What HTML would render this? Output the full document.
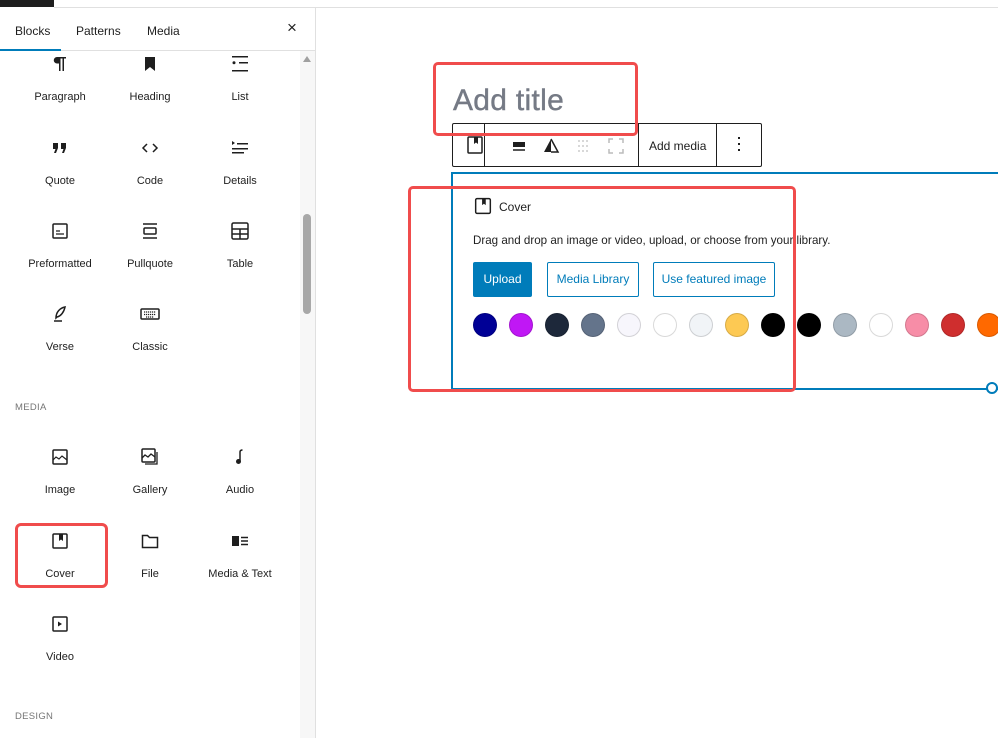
<!DOCTYPE html>
<html><head><meta charset="utf-8"><style>
*{margin:0;padding:0;box-sizing:border-box}
body{width:998px;height:738px;overflow:hidden;background:#fff;font-family:"Liberation Sans",sans-serif;color:#1e1e1e;position:relative}
.a{position:absolute}
.lbl{position:absolute;width:90px;text-align:center;font-size:11px;color:#1e1e1e}
.ic{position:absolute;width:24px;height:24px}
.cap{position:absolute;left:15px;font-size:9.5px;color:#757575;letter-spacing:.3px}
.dot{position:absolute;top:313px;width:24px;height:24px;border-radius:50%;border:1px solid rgba(0,0,0,.15)}
</style></head><body>
<div class="a" style="left:0;top:0;width:54px;height:7px;background:#1e1e1e"></div>
<div class="a" style="left:54px;top:7px;width:944px;height:1px;background:#e0e0e0"></div>
<div class="a" style="left:315px;top:8px;width:1px;height:730px;background:#e0e0e0"></div>
<div class="a" style="left:0;top:50px;width:315px;height:1px;background:#e0e0e0"></div>
<div class="a" style="left:0;top:49px;width:61px;height:2px;background:#007cba"></div>
<div class="a" style="left:15px;top:24px;font-size:12px">Blocks</div>
<div class="a" style="left:76px;top:24px;font-size:12px">Patterns</div>
<div class="a" style="left:147px;top:24px;font-size:12px">Media</div>
<div class="a" style="left:287px;top:18px;font-size:17px">×</div>
<div class="a" style="left:300px;top:51px;width:15px;height:687px;background:#f7f7f7"></div>
<div class="a" style="left:303px;top:56px;width:0;height:0;border-left:4px solid transparent;border-right:4px solid transparent;border-bottom:6px solid #a0a0a0"></div>
<div class="a" style="left:303px;top:214px;width:8px;height:100px;border-radius:4px;background:#a8a8a8"></div>

<svg class="ic" style="left:48px;top:52px" viewBox="0 0 24 24"><path d="M9 5h9v1.5h-2V19h-1.5V6.5h-2V19H11v-7.5H9a3.25 3.25 0 010-6.5z" fill="#1e1e1e"/></svg>
<svg class="ic" style="left:138px;top:52px" viewBox="0 0 24 24"><path d="M7 5h10v14l-5-4-5 4z" fill="#1e1e1e"/></svg>
<svg class="ic" style="left:228px;top:52px" viewBox="0 0 24 24"><path d="M4 4h16v1.5H4zM11 10h9v1.5h-9zM4 18h16v1.5H4z" fill="#1e1e1e"/><circle cx="6" cy="10.7" r="1.5" fill="#1e1e1e"/></svg>
<div class="lbl" style="left:15px;top:91px">Paragraph</div>
<div class="lbl" style="left:105px;top:91px">Heading</div>
<div class="lbl" style="left:195px;top:91px">List</div>
<svg class="ic" style="left:48px;top:136px" viewBox="0 0 24 24"><path d="M5 7h5v5l-2 5H6l1.5-4H5zM13 7h5v5l-2 5h-2l1.5-4H13z" fill="#1e1e1e"/></svg>
<svg class="ic" style="left:138px;top:136px" viewBox="0 0 24 24"><path d="M9 8l-4 4 4 4M15 8l4 4-4 4" fill="none" stroke="#1e1e1e" stroke-width="1.5"/></svg>
<svg class="ic" style="left:228px;top:136px" viewBox="0 0 24 24"><path d="M4 5l3 2-3 2zM9 7h11v1.5H9zM4 12h16v1.5H4zM4 16h12v1.5H4z" fill="#1e1e1e"/></svg>
<div class="lbl" style="left:15px;top:175px">Quote</div>
<div class="lbl" style="left:105px;top:175px">Code</div>
<div class="lbl" style="left:195px;top:175px">Details</div>
<svg class="ic" style="left:48px;top:219px" viewBox="0 0 24 24"><rect x="5" y="5" width="14" height="14" rx="1" fill="none" stroke="#1e1e1e" stroke-width="1.5"/><path d="M8 12h4M8 15h8" stroke="#1e1e1e" stroke-width="1.3"/></svg>
<svg class="ic" style="left:138px;top:219px" viewBox="0 0 24 24"><path d="M5 5h14M5 19h14" stroke="#1e1e1e" stroke-width="1.5"/><rect x="6" y="9" width="12" height="6" rx="1" fill="none" stroke="#1e1e1e" stroke-width="1.5"/></svg>
<svg class="ic" style="left:228px;top:219px" viewBox="0 0 24 24"><rect x="4" y="4" width="16" height="16" rx="1.5" fill="none" stroke="#1e1e1e" stroke-width="1.5"/><path d="M4 10h16M4 15h16M12 10v10" stroke="#1e1e1e" stroke-width="1.5"/></svg>
<div class="lbl" style="left:15px;top:258px">Preformatted</div>
<div class="lbl" style="left:105px;top:258px">Pullquote</div>
<div class="lbl" style="left:195px;top:258px">Table</div>
<svg class="ic" style="left:48px;top:302px" viewBox="0 0 24 24"><path d="M8 16c0-6 4-10 9-11-1 5-4 9-8 10z" fill="none" stroke="#1e1e1e" stroke-width="1.5"/><path d="M6 19h8" stroke="#1e1e1e" stroke-width="1.5"/></svg>
<svg class="ic" style="left:138px;top:302px" viewBox="0 0 24 24"><rect x="3" y="7" width="18" height="10" rx="1" fill="none" stroke="#1e1e1e" stroke-width="1.5"/><path d="M6 10h12M6 12.5h12M8 15h8" stroke="#1e1e1e" stroke-width="1.2" stroke-dasharray="1.2 0.8"/></svg>
<div class="lbl" style="left:15px;top:341px">Verse</div>
<div class="lbl" style="left:105px;top:341px">Classic</div>

<div class="cap" style="top:402px">MEDIA</div>
<svg class="ic" style="left:48px;top:445px" viewBox="0 0 24 24"><rect x="5" y="5" width="14" height="14" rx="1" fill="none" stroke="#1e1e1e" stroke-width="1.5"/><path d="M5 15l3-3 3 2 3-3 5 4" fill="none" stroke="#1e1e1e" stroke-width="1.2"/></svg>
<svg class="ic" style="left:138px;top:445px" viewBox="0 0 24 24"><rect x="4" y="4" width="13" height="13" rx="1" fill="none" stroke="#1e1e1e" stroke-width="1.5"/><path d="M4 13l3-3 3 2 3-3 4 3M19 7v12H7" fill="none" stroke="#1e1e1e" stroke-width="1.3"/></svg>
<svg class="ic" style="left:228px;top:445px" viewBox="0 0 24 24"><path d="M12 16V7c0-1.5 1-2 2.5-2" fill="none" stroke="#1e1e1e" stroke-width="1.5"/><circle cx="10.5" cy="16.5" r="2.5" fill="#1e1e1e"/></svg>
<div class="lbl" style="left:15px;top:484px">Image</div>
<div class="lbl" style="left:105px;top:484px">Gallery</div>
<div class="lbl" style="left:195px;top:484px">Audio</div>
<svg class="ic" style="left:48px;top:529px" viewBox="0 0 24 24"><rect x="5" y="5" width="14" height="14" rx="1" fill="none" stroke="#1e1e1e" stroke-width="1.5"/><path d="M11 5h4v7l-2-1.5-2 1.5z" fill="#1e1e1e"/></svg>
<svg class="ic" style="left:138px;top:529px" viewBox="0 0 24 24"><path d="M4.5 6.5h5l2 2h8v10h-15z" fill="none" stroke="#1e1e1e" stroke-width="1.5"/></svg>
<svg class="ic" style="left:228px;top:529px" viewBox="0 0 24 24"><rect x="4" y="7" width="7" height="10" fill="#1e1e1e"/><path d="M13 8.5h7M13 12h7M13 15.5h7" stroke="#1e1e1e" stroke-width="1.5"/></svg>
<div class="lbl" style="left:15px;top:568px">Cover</div>
<div class="lbl" style="left:105px;top:568px">File</div>
<div class="lbl" style="left:195px;top:568px">Media &amp; Text</div>
<div class="a" style="left:15px;top:523px;width:93px;height:65px;border:3px solid #f04c4c;border-radius:6px"></div>
<svg class="ic" style="left:48px;top:612px" viewBox="0 0 24 24"><rect x="5" y="5" width="14" height="14" rx="1" fill="none" stroke="#1e1e1e" stroke-width="1.5"/><path d="M10 9.5l4 2.5-4 2.5z" fill="#1e1e1e"/></svg>
<div class="lbl" style="left:15px;top:651px">Video</div>
<div class="cap" style="top:711px">DESIGN</div>

<div class="a" style="left:453px;top:84px;font-size:30px;color:#757a85;letter-spacing:0.3px;-webkit-text-stroke:0.4px #757a85">Add title</div>
<div class="a" style="left:452px;top:123px;width:310px;height:44px;border:1px solid #1e1e1e;border-radius:2px"></div>
<div class="a" style="left:484px;top:123px;width:1px;height:44px;background:#1e1e1e"></div>
<div class="a" style="left:638px;top:123px;width:1px;height:44px;background:#1e1e1e"></div>
<div class="a" style="left:716px;top:123px;width:1px;height:44px;background:#1e1e1e"></div>
<svg class="ic" style="left:463px;top:133px" viewBox="0 0 24 24"><rect x="5" y="4" width="14" height="16" rx="1" fill="none" stroke="#1e1e1e" stroke-width="1.5"/><path d="M11 4h4v7l-2-1.5-2 1.5z" fill="#1e1e1e"/></svg>
<svg class="ic" style="left:507px;top:134px" viewBox="0 0 24 24"><rect x="6" y="8" width="12" height="5" fill="#1e1e1e"/><path d="M6 16h12" stroke="#1e1e1e" stroke-width="1.5"/></svg>
<svg class="ic" style="left:539px;top:134px" viewBox="0 0 24 24"><path d="M12 5l-7 13h7z" fill="#1e1e1e"/><path d="M12 5l7 13h-7" fill="none" stroke="#1e1e1e" stroke-width="1.5"/></svg>
<svg class="ic" style="left:572px;top:134px" viewBox="0 0 24 24"><path d="M6 7h12M6 12h12M6 17h12" stroke="#ccc" stroke-width="1.5" stroke-dasharray="2 2"/></svg>
<svg class="ic" style="left:604px;top:134px" viewBox="0 0 24 24"><path d="M5 9V5h4M15 5h4v4M19 15v4h-4M9 19H5v-4" fill="none" stroke="#bbb" stroke-width="1.5"/></svg>
<div class="a" style="left:649px;top:139px;font-size:12px">Add media</div>
<div class="a" style="left:738px;top:137px;width:2px;height:2px;background:#1e1e1e;box-shadow:0 6px 0 #1e1e1e,0 12px 0 #1e1e1e"></div>

<div class="a" style="left:451px;top:172px;width:560px;height:218px;border:2px solid #007cba"></div>
<div class="a" style="left:986px;top:382px;width:12px;height:12px;border:2px solid #007cba;border-radius:50%;background:#fff"></div>
<svg class="ic" style="left:472px;top:195px;width:22px;height:22px" viewBox="0 0 24 24"><rect x="4" y="4" width="16" height="16" rx="1.5" fill="none" stroke="#1e1e1e" stroke-width="1.6"/><path d="M11 4h4v7l-2-1.5-2 1.5z" fill="#1e1e1e"/></svg>
<div class="a" style="left:499px;top:200px;font-size:12px">Cover</div>
<div class="a" style="left:473px;top:234px;font-size:11.6px">Drag and drop an image or video, upload, or choose from your library.</div>
<div class="a" style="left:473px;top:262px;width:59px;height:35px;background:#007cba;border-radius:2px;color:#fff;font-size:12px;text-align:center;line-height:35px">Upload</div>
<div class="a" style="left:547px;top:262px;width:92px;height:35px;border:1px solid #007cba;border-radius:2px;color:#007cba;font-size:12px;text-align:center;line-height:33px">Media Library</div>
<div class="a" style="left:653px;top:262px;width:122px;height:35px;border:1px solid #007cba;border-radius:2px;color:#007cba;font-size:12px;text-align:center;line-height:33px">Use featured image</div>
<div class="dot" style="left:473px;background:#000096"></div>
<div class="dot" style="left:509px;background:#c017f5"></div>
<div class="dot" style="left:545px;background:#1d283a"></div>
<div class="dot" style="left:581px;background:#64748b"></div>
<div class="dot" style="left:617px;background:#f7f6fc"></div>
<div class="dot" style="left:653px;background:#fff"></div>
<div class="dot" style="left:689px;background:#f1f4f7"></div>
<div class="dot" style="left:725px;background:#fdc953"></div>
<div class="dot" style="left:761px;background:#000"></div>
<div class="dot" style="left:797px;background:#000"></div>
<div class="dot" style="left:833px;background:#abb8c3"></div>
<div class="dot" style="left:869px;background:#fff"></div>
<div class="dot" style="left:905px;background:#f78da7"></div>
<div class="dot" style="left:941px;background:#cf2e2e"></div>
<div class="dot" style="left:977px;background:#ff6900"></div>

<div class="a" style="left:433px;top:62px;width:205px;height:74px;border:3px solid #f04c4c;border-radius:5px"></div>
<div class="a" style="left:408px;top:186px;width:388px;height:206px;border:3px solid #f04c4c;border-radius:5px"></div>
</body></html>
